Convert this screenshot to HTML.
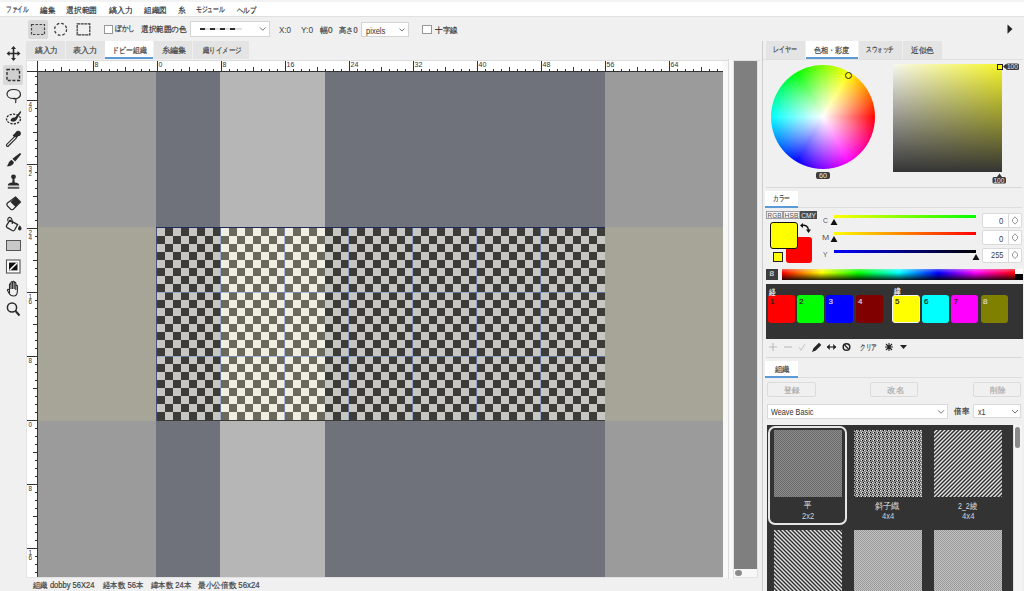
<!DOCTYPE html>
<html><head><meta charset="utf-8">
<style>
*{margin:0;padding:0;box-sizing:border-box}
html,body{width:1024px;height:591px;overflow:hidden;background:#f0f0f0;font-family:"Liberation Sans",sans-serif;font-size:9px;color:#333}
.a{position:absolute}
.t{position:absolute;white-space:nowrap;line-height:1;transform-origin:0 0;-webkit-text-stroke:0.2px currentColor}
</style></head><body>
<!-- menu bar -->
<div class="a" style="left:0;top:0;width:1024px;height:17px;background:#fff;border-bottom:1px solid #e0e0e0;border-top:2px solid #f3f3f3"></div>

<!-- canvas svg -->
<svg class="a" style="left:0;top:0" width="1024" height="591" shape-rendering="crispEdges">
<defs>
<pattern id="chk" x="157" y="228" width="16" height="16" patternUnits="userSpaceOnUse">
<rect width="16" height="16" fill="#c6c6c2"/><rect x="8" width="8" height="8" fill="#3d3c38"/><rect y="8" width="8" height="8" fill="#3d3c38"/>
</pattern>
<pattern id="chk2" x="157" y="228" width="16" height="16" patternUnits="userSpaceOnUse">
<rect width="16" height="16" fill="#f1efe2"/><rect x="8" width="8" height="8" fill="#6b695d"/><rect y="8" width="8" height="8" fill="#6b695d"/>
</pattern>
</defs>
<!-- rulers -->
<rect x="26" y="60" width="698" height="518" fill="#e2e2e2"/>
<rect x="27" y="61" width="696" height="10" fill="#fff"/>
<rect x="27" y="71" width="11" height="506" fill="#fff"/>
<!-- bands -->
<rect x="38" y="72" width="685" height="505" fill="#9b9b9b"/>
<rect x="38" y="227" width="685" height="194" fill="#a7a598"/>
<rect x="156" y="72" width="64" height="505" fill="#6f727b"/>
<rect x="220" y="72" width="105" height="505" fill="#b6b6b6"/>
<rect x="325" y="72" width="280" height="505" fill="#6f727b"/>
<rect x="156" y="227" width="449" height="194" fill="#3d3c38"/><rect x="156" y="227" width="1" height="194" fill="#4b5078"/>
<rect x="157" y="228" width="448" height="192" fill="url(#chk)"/>
<rect x="221" y="228" width="104" height="192" fill="url(#chk2)"/>
<g fill="#7c9ad4" opacity="0.6">
<rect x="220" y="228" width="1" height="192"/><rect x="284" y="228" width="1" height="192"/><rect x="348" y="228" width="1" height="192"/><rect x="412" y="228" width="1" height="192"/><rect x="476" y="228" width="1" height="192"/><rect x="540" y="228" width="1" height="192"/>
<rect x="157" y="292" width="448" height="1"/><rect x="157" y="356" width="448" height="1"/>
</g>
<rect x="156" y="227" width="449" height="1" fill="#1d2a5a"/>
<rect x="27" y="71" width="696" height="1" fill="#333"/>
<rect x="37" y="60" width="1" height="517" fill="#333"/>
<g fill="#333"><rect x="45" y="69" width="1" height="2"/>
<rect x="53" y="69" width="1" height="2"/>
<rect x="61" y="67" width="1" height="4"/>
<rect x="69" y="69" width="1" height="2"/>
<rect x="77" y="69" width="1" height="2"/>
<rect x="85" y="69" width="1" height="2"/>
<rect x="93" y="61" width="1" height="10"/>
<rect x="101" y="69" width="1" height="2"/>
<rect x="109" y="69" width="1" height="2"/>
<rect x="117" y="69" width="1" height="2"/>
<rect x="125" y="67" width="1" height="4"/>
<rect x="133" y="69" width="1" height="2"/>
<rect x="141" y="69" width="1" height="2"/>
<rect x="149" y="69" width="1" height="2"/>
<rect x="157" y="61" width="1" height="10"/>
<rect x="165" y="69" width="1" height="2"/>
<rect x="173" y="69" width="1" height="2"/>
<rect x="181" y="69" width="1" height="2"/>
<rect x="189" y="67" width="1" height="4"/>
<rect x="197" y="69" width="1" height="2"/>
<rect x="205" y="69" width="1" height="2"/>
<rect x="213" y="69" width="1" height="2"/>
<rect x="221" y="61" width="1" height="10"/>
<rect x="229" y="69" width="1" height="2"/>
<rect x="237" y="69" width="1" height="2"/>
<rect x="245" y="69" width="1" height="2"/>
<rect x="253" y="67" width="1" height="4"/>
<rect x="261" y="69" width="1" height="2"/>
<rect x="269" y="69" width="1" height="2"/>
<rect x="277" y="69" width="1" height="2"/>
<rect x="285" y="61" width="1" height="10"/>
<rect x="293" y="69" width="1" height="2"/>
<rect x="301" y="69" width="1" height="2"/>
<rect x="309" y="69" width="1" height="2"/>
<rect x="317" y="67" width="1" height="4"/>
<rect x="325" y="69" width="1" height="2"/>
<rect x="333" y="69" width="1" height="2"/>
<rect x="341" y="69" width="1" height="2"/>
<rect x="349" y="61" width="1" height="10"/>
<rect x="357" y="69" width="1" height="2"/>
<rect x="365" y="69" width="1" height="2"/>
<rect x="373" y="69" width="1" height="2"/>
<rect x="381" y="67" width="1" height="4"/>
<rect x="389" y="69" width="1" height="2"/>
<rect x="397" y="69" width="1" height="2"/>
<rect x="405" y="69" width="1" height="2"/>
<rect x="413" y="61" width="1" height="10"/>
<rect x="421" y="69" width="1" height="2"/>
<rect x="429" y="69" width="1" height="2"/>
<rect x="437" y="69" width="1" height="2"/>
<rect x="445" y="67" width="1" height="4"/>
<rect x="453" y="69" width="1" height="2"/>
<rect x="461" y="69" width="1" height="2"/>
<rect x="469" y="69" width="1" height="2"/>
<rect x="477" y="61" width="1" height="10"/>
<rect x="485" y="69" width="1" height="2"/>
<rect x="493" y="69" width="1" height="2"/>
<rect x="501" y="69" width="1" height="2"/>
<rect x="509" y="67" width="1" height="4"/>
<rect x="517" y="69" width="1" height="2"/>
<rect x="525" y="69" width="1" height="2"/>
<rect x="533" y="69" width="1" height="2"/>
<rect x="541" y="61" width="1" height="10"/>
<rect x="549" y="69" width="1" height="2"/>
<rect x="557" y="69" width="1" height="2"/>
<rect x="565" y="69" width="1" height="2"/>
<rect x="573" y="67" width="1" height="4"/>
<rect x="581" y="69" width="1" height="2"/>
<rect x="589" y="69" width="1" height="2"/>
<rect x="597" y="69" width="1" height="2"/>
<rect x="605" y="61" width="1" height="10"/>
<rect x="613" y="69" width="1" height="2"/>
<rect x="621" y="69" width="1" height="2"/>
<rect x="629" y="69" width="1" height="2"/>
<rect x="637" y="67" width="1" height="4"/>
<rect x="645" y="69" width="1" height="2"/>
<rect x="653" y="69" width="1" height="2"/>
<rect x="661" y="69" width="1" height="2"/>
<rect x="669" y="61" width="1" height="10"/>
<rect x="677" y="69" width="1" height="2"/>
<rect x="685" y="69" width="1" height="2"/>
<rect x="693" y="69" width="1" height="2"/>
<rect x="701" y="67" width="1" height="4"/>
<rect x="709" y="69" width="1" height="2"/>
<rect x="717" y="69" width="1" height="2"/>
</g>
<g fill="#333">
<rect x="35" y="76" width="3" height="1"/>
<rect x="35" y="84" width="3" height="1"/>
<rect x="35" y="92" width="3" height="1"/>
<rect x="27" y="100" width="11" height="1"/>
<rect x="35" y="108" width="3" height="1"/>
<rect x="35" y="116" width="3" height="1"/>
<rect x="35" y="124" width="3" height="1"/>
<rect x="33" y="132" width="5" height="1"/>
<rect x="35" y="140" width="3" height="1"/>
<rect x="35" y="148" width="3" height="1"/>
<rect x="35" y="156" width="3" height="1"/>
<rect x="27" y="164" width="11" height="1"/>
<rect x="35" y="172" width="3" height="1"/>
<rect x="35" y="180" width="3" height="1"/>
<rect x="35" y="188" width="3" height="1"/>
<rect x="33" y="196" width="5" height="1"/>
<rect x="35" y="204" width="3" height="1"/>
<rect x="35" y="212" width="3" height="1"/>
<rect x="35" y="220" width="3" height="1"/>
<rect x="27" y="228" width="11" height="1"/>
<rect x="35" y="236" width="3" height="1"/>
<rect x="35" y="244" width="3" height="1"/>
<rect x="35" y="252" width="3" height="1"/>
<rect x="33" y="260" width="5" height="1"/>
<rect x="35" y="268" width="3" height="1"/>
<rect x="35" y="276" width="3" height="1"/>
<rect x="35" y="284" width="3" height="1"/>
<rect x="27" y="292" width="11" height="1"/>
<rect x="35" y="300" width="3" height="1"/>
<rect x="35" y="308" width="3" height="1"/>
<rect x="35" y="316" width="3" height="1"/>
<rect x="33" y="324" width="5" height="1"/>
<rect x="35" y="332" width="3" height="1"/>
<rect x="35" y="340" width="3" height="1"/>
<rect x="35" y="348" width="3" height="1"/>
<rect x="27" y="356" width="11" height="1"/>
<rect x="35" y="364" width="3" height="1"/>
<rect x="35" y="372" width="3" height="1"/>
<rect x="35" y="380" width="3" height="1"/>
<rect x="33" y="388" width="5" height="1"/>
<rect x="35" y="396" width="3" height="1"/>
<rect x="35" y="404" width="3" height="1"/>
<rect x="35" y="412" width="3" height="1"/>
<rect x="27" y="420" width="11" height="1"/>
<rect x="35" y="428" width="3" height="1"/>
<rect x="35" y="436" width="3" height="1"/>
<rect x="35" y="444" width="3" height="1"/>
<rect x="33" y="452" width="5" height="1"/>
<rect x="35" y="460" width="3" height="1"/>
<rect x="35" y="468" width="3" height="1"/>
<rect x="35" y="476" width="3" height="1"/>
<rect x="27" y="484" width="11" height="1"/>
<rect x="35" y="492" width="3" height="1"/>
<rect x="35" y="500" width="3" height="1"/>
<rect x="35" y="508" width="3" height="1"/>
<rect x="33" y="516" width="5" height="1"/>
<rect x="35" y="524" width="3" height="1"/>
<rect x="35" y="532" width="3" height="1"/>
<rect x="35" y="540" width="3" height="1"/>
<rect x="27" y="548" width="11" height="1"/>
<rect x="35" y="556" width="3" height="1"/>
<rect x="35" y="564" width="3" height="1"/>
<rect x="35" y="572" width="3" height="1"/></g>
</svg>


<!-- ruler labels -->
<svg class="a" style="left:0;top:0" width="760" height="591" font-family="Liberation Sans" font-size="7" fill="#333">
<text x="94.5" y="66.6">8</text><text x="158.5" y="66.6">0</text><text x="222.5" y="66.6">8</text><text x="286.5" y="66.6">16</text><text x="350.5" y="66.6">24</text><text x="414.5" y="66.6">32</text><text x="478.5" y="66.6">40</text><text x="542.5" y="66.6">48</text><text x="606.5" y="66.6">56</text><text x="670.5" y="66.6">64</text>
<g font-size="6.3"><text x="28.4" y="106.6">4</text><text x="28.4" y="111.9">0</text><text x="28.4" y="170.6">3</text><text x="28.4" y="175.9">2</text><text x="28.4" y="234.6">2</text><text x="28.4" y="239.9">4</text><text x="28.4" y="298.6">1</text><text x="28.4" y="303.9">6</text><text x="28.4" y="362.6">8</text><text x="28.4" y="426.6">0</text><text x="28.4" y="490.6">8</text><text x="28.4" y="554.6">1</text><text x="28.4" y="559.9">6</text></g>
</svg>

<!-- toolbar -->
<div class="a" style="left:28px;top:20px;width:20px;height:19px;background:#d9d9d9;border-radius:2px"></div>
<svg class="a" style="left:0;top:17px" width="100" height="24">
<rect x="31.5" y="7.5" width="13" height="10" fill="#cfcfcf" stroke="#444" stroke-width="1.2" stroke-dasharray="2.5 1.5"/>
<circle cx="60.6" cy="12.3" r="6" fill="none" stroke="#3a3a3a" stroke-width="1.3" stroke-dasharray="2.7 2"/>
<rect x="77.2" y="6.9" width="12.6" height="11" fill="none" stroke="#3a3a3a" stroke-width="1.2" stroke-dasharray="3 .6"/>
</svg>
<div class="a" style="left:104px;top:25px;width:9px;height:9px;background:#fff;border:1px solid #999"></div>
<div class="a" style="left:190px;top:21px;width:80px;height:16px;background:#fff;border:1px solid #d4d4d4"></div>
<svg class="a" style="left:190px;top:21px" width="80" height="16">
<g fill="#111"><rect x="10" y="7" width="5" height="2"/><rect x="20" y="7" width="5" height="2"/><rect x="30" y="7" width="5" height="2"/><rect x="40" y="7" width="5" height="2"/></g>
<rect x="10" y="7.5" width="42" height="1" fill="#888" opacity=".5"/>
<path d="M70 6.5 L72.8 9.3 L75.6 6.5" fill="none" stroke="#777" stroke-width="1"/>
</svg>
<div class="a" style="left:361px;top:22px;width:48px;height:15px;background:#fff;border:1px solid #d4d4d4"></div>
<svg class="a" style="left:361px;top:22px" width="48" height="15"><path d="M38.5 6.5 L41 9 L43.5 6.5" fill="none" stroke="#777" stroke-width="1"/></svg>
<div class="a" style="left:422px;top:25px;width:10px;height:9px;background:#fff;border:1px solid #999"></div>
<svg class="a" style="left:1005px;top:24px" width="10" height="12"><path d="M2.5 0.5 L7.5 5 L2.5 9.8Z" fill="#222"/></svg>

<!-- left tools -->
<div class="a" style="left:3px;top:65px;width:20px;height:20px;background:#d9d9d9;border-radius:2px"></div>
<svg class="a" style="left:0;top:40px" width="27" height="290" fill="#2a2a2a" stroke="#2a2a2a">
<!-- move -->
<g stroke-width="1.6" fill="none"><path d="M13.5 8 V19 M8 13.5 H19"/></g>
<path d="M13.5 6 L11 9 H16Z M13.5 21 L11 18 H16Z M6.5 13.5 L9.5 11 V16Z M20.5 13.5 L17.5 11 V16Z" stroke="none"/>
<!-- rect select -->
<rect x="7" y="29.5" width="12.5" height="11" fill="#cfcfcf" stroke="#333" stroke-width="1.4" stroke-dasharray="3 1.6"/>
<!-- lasso -->
<path d="M13 58.5 C15 59.5 20.5 58 20.5 54.5 C20.5 51 17.5 49.5 13.5 49.5 C9.5 49.5 7 51.5 7 54 C7 57 10 58.5 13 58.5 C14.5 58.5 16 58 16 59.5 C16 61 15 62 16 63" fill="none" stroke-width="1.2"/>
<!-- eye brush -->
<ellipse cx="13.5" cy="79" rx="7" ry="4.8" fill="none" stroke-width="1.3" stroke-dasharray="2.2 1.2"/>
<path d="M10.5 80.5 C11 78 13 77 15 77.5 L20 71.5 C20.5 71 21.5 71.5 21 72.5 L17 79 C16 82 12 82.5 10.5 80.5Z" stroke="none"/>
<!-- eyedropper -->
<circle cx="18.2" cy="93.4" r="2.6" stroke="none"/>
<path d="M12.6 95.6 L15.6 92.6 L18.8 95.8 L15.8 98.8Z" stroke="none"/>
<path d="M15.2 97.6 L7.6 105.2" stroke-width="3.4" stroke-linecap="round"/>
<path d="M15.2 97.6 L7.6 105.2" stroke="#f0f0f0" stroke-width="1.2" stroke-linecap="round"/>
<!-- brush -->
<path d="M20.2 113.2 C21 113.2 21.4 114 20.9 114.6 L15.2 121.4 L12.4 118.8 L19.3 113.6 C19.6 113.4 19.9 113.2 20.2 113.2Z M11.8 120 L13.9 122.1 C13.6 124.8 11.2 126.6 6.4 126.3 C7.6 125.4 8 124.6 8.6 123 C9.2 121.2 10.6 120.3 11.8 120Z" stroke="none"/>
<!-- stamp -->
<circle cx="13.5" cy="136.8" r="2.4" stroke="none"/>
<path d="M7.8 145.6 C7.8 143.4 9.8 142.8 12.3 142.5 L12.6 139 H14.4 L14.7 142.5 C17.2 142.8 19.3 143.4 19.3 145.6Z" stroke="none"/>
<rect x="7.8" y="146.8" width="11.5" height="2" fill="#555" stroke="none"/>
<!-- eraser -->
<path d="M15.5 157 L20.5 162 L13.5 169 C12.5 170 11.5 170 10.5 169 L7.5 166 C6.5 165 6.5 164 7.5 163Z" fill="none" stroke-width="1.1"/>
<path d="M15.5 157 L20.5 162 L15.5 167 L10.5 162Z" stroke="none"/>
<!-- bucket -->
<path d="M10 180.2 L17.6 184.6 L14.6 190 C14.1 190.8 13.1 191 12.2 190.5 L7.2 187.6 C6.4 187.1 6.1 186.2 6.6 185.3Z" fill="none" stroke-width="1.3"/>
<path d="M8.2 181.5 C7.2 179.6 8 177.4 9.6 177.4 C11.2 177.4 12.4 179 12.2 182.6" fill="none" stroke-width="1.1"/>
<circle cx="12.4" cy="183" r=".9" stroke="none"/>
<path d="M19.8 185.2 C20.9 186.8 21.6 187.8 21.6 188.6 C21.6 189.7 20.8 190.4 19.8 190.4 C18.8 190.4 18 189.7 18 188.6 C18 187.8 18.7 186.8 19.8 185.2Z" stroke="none"/>
<!-- rect -->
<rect x="6.5" y="200.5" width="14" height="10" fill="#c8c8c8" stroke="#555" stroke-width="1"/>
<!-- swap -->
<rect x="6.5" y="220" width="13.5" height="13" fill="#fff" stroke="#555" stroke-width="1.1"/>
<rect x="9" y="222.6" width="8.5" height="7.8" fill="#111" stroke="none"/>
<path d="M9.8 230 L17 223" stroke="#fff" stroke-width="1.6"/>
<!-- hand -->
<path d="M9.5 254 V244.5 C9.5 243.5 11 243.5 11 244.5 V249 V242.5 C11 241.5 12.6 241.5 12.6 242.5 V249 V242 C12.6 241 14.2 241 14.2 242 V249 V243 C14.2 242 15.8 242 15.8 243 V250 V246 C15.8 245 17.4 245 17.4 246 V251 C17.4 254 16 256 13.5 256 C11.5 256 10.5 255.5 9.5 254 L7.5 250.5 C7 249.5 8 248.8 8.8 249.5 L9.5 250.5" fill="none" stroke-width="1.1"/>
<!-- zoom -->
<circle cx="12" cy="267.5" r="4.6" fill="none" stroke-width="1.5"/>
<path d="M15.5 271 L19.5 275.5" stroke-width="2"/>
</svg>

<!-- doc tabs -->
<div class="a" style="left:26px;top:41px;width:39px;height:18px;background:#e4e4e4"></div>
<div class="a" style="left:66px;top:41px;width:39px;height:18px;background:#e4e4e4"></div>
<div class="a" style="left:105px;top:41px;width:48px;height:18px;background:#fff;border-bottom:2px solid #5b9ad6"></div>
<div class="a" style="left:154px;top:41px;width:38px;height:18px;background:#e4e4e4"></div>
<div class="a" style="left:193px;top:41px;width:56px;height:18px;background:#e4e4e4"></div>
<div class="a" style="left:26px;top:60px;width:734px;height:1px;background:#dcdcdc"></div>

<!-- scroll strip -->
<div class="a" style="left:723px;top:61px;width:5px;height:517px;background:#f8f8f8"></div>
<div class="a" style="left:728px;top:59px;width:1px;height:520px;background:#dcdcdc"></div>
<div class="a" style="left:729px;top:60px;width:4px;height:518px;background:#f8f8f8"></div>
<div class="a" style="left:733px;top:60px;width:25px;height:518px;background:#f7f7f7;border:1px solid #e2e2e2"></div>
<div class="a" style="left:734px;top:61px;width:23px;height:508px;background:#7f7f7f"></div>
<div class="a" style="left:735px;top:570px;width:7px;height:6px;border-radius:50%;background:#8a8a8a"></div>

<!-- status -->

<!-- right panel -->
<div class="a" style="left:762px;top:41px;width:1px;height:550px;background:#cdcdcd"></div>
<div class="a" style="left:766px;top:41px;width:39px;height:18px;background:#e4e4e4"></div>
<div class="a" style="left:806px;top:41px;width:52px;height:18px;background:#fff;border-bottom:2px solid #5b9ad6"></div>
<div class="a" style="left:859px;top:41px;width:43px;height:18px;background:#e4e4e4"></div>
<div class="a" style="left:903px;top:41px;width:39px;height:18px;background:#e4e4e4"></div>
<div class="a" style="left:763px;top:59px;width:260px;height:1px;background:#e0e0e0"></div>

<div class="a" style="left:771px;top:65px;width:104px;height:104px;border-radius:50%;background:radial-gradient(circle closest-side,#fff 0%,rgba(255,255,255,.5) 50%,rgba(255,255,255,0) 100%),conic-gradient(from 90deg,#f00,#f0f,#00f,#0ff,#0f0,#ff0,#f00)"></div>
<div class="a" style="left:844.5px;top:71.5px;width:7px;height:7px;border-radius:50%;border:1.2px solid #222"></div>
<div class="a" style="left:816px;top:172px;width:14px;height:7px;border-radius:2px;background:#3c3c3c"></div>

<div class="a" style="left:893px;top:64px;width:109px;height:108px;background:linear-gradient(to bottom,rgba(51,51,51,0) 0%,#343434 100%),linear-gradient(to right,#f8f8ee,#f6f628)"></div>
<div class="a" style="left:997px;top:64px;width:5.5px;height:5.5px;background:#ff0;border:1px solid #222"></div>
<svg class="a" style="left:1002px;top:62px" width="20" height="10"><path d="M1 4.5 L4 2 V7Z" fill="#333"/><rect x="4" y="1.5" width="13" height="6.5" rx="1.5" fill="#3c3c3c"/><text x="5" y="7.3" font-family="Liberation Sans" font-size="6.5" fill="#eee">100</text></svg>
<svg class="a" style="left:990px;top:172px" width="18" height="12"><path d="M9.5 1.5 L12 5 H7Z" fill="#333"/><rect x="2.5" y="5" width="13.5" height="6.5" rx="1.5" fill="#3c3c3c"/><text x="3.5" y="10.8" font-family="Liberation Sans" font-size="6.5" fill="#eee">100</text></svg>
<div class="a" style="left:766px;top:187px;width:256px;height:1px;background:#d8d8d8"></div>

<!-- color section -->
<div class="a" style="left:765px;top:191px;width:33px;height:17px;background:#fff;border-bottom:2px solid #5b9ad6"></div>
<div class="a" style="left:798px;top:207px;width:224px;height:1px;background:#dedede"></div>
<svg class="a" style="left:766px;top:211px" width="52" height="8" font-family="Liberation Sans" font-size="6.8">
<rect x="0.5" y="0.5" width="16" height="7" fill="#f4f4f4" stroke="#8a8a8a" stroke-width=".8"/><rect x="17.5" y="0.5" width="16" height="7" fill="#f4f4f4" stroke="#8a8a8a" stroke-width=".8"/><rect x="34" y="0" width="17" height="8" fill="#4a4a4a"/>
<text x="1.6" y="6.7" fill="#555" textLength="13.8" lengthAdjust="spacingAndGlyphs">RGB</text><text x="18.6" y="6.7" fill="#555" textLength="13.8" lengthAdjust="spacingAndGlyphs">HSB</text><text x="35.2" y="6.7" fill="#eee" textLength="14.6" lengthAdjust="spacingAndGlyphs">CMY</text>
</svg>
<div class="a" style="left:786px;top:237px;width:26px;height:26px;background:#f00;border-radius:3px"></div>
<div class="a" style="left:770px;top:222px;width:28px;height:27px;background:#ff0;border:1.6px solid #111;border-radius:3px"></div>
<div class="a" style="left:773px;top:252px;width:10px;height:10px;background:#ff0;border:1px solid #222"></div>
<svg class="a" style="left:799px;top:222px" width="14" height="13"><path d="M3 3.5 C6 2.5 9 4 9.5 8" fill="none" stroke="#111" stroke-width="1.4"/><path d="M1 3.5 L4 1 V6Z M9.5 11 L7 7.5 H12Z" fill="#111"/></svg>
<div class="a" style="left:834px;top:215px;width:142px;height:3px;background:linear-gradient(to right,#ff0,#0f0)"></div>
<div class="a" style="left:834px;top:232px;width:142px;height:3px;background:linear-gradient(to right,#ff0,#f00)"></div>
<div class="a" style="left:834px;top:250px;width:142px;height:3px;background:linear-gradient(to right,#00f,#000)"></div>
<svg class="a" style="left:828px;top:218px" width="160" height="44"><path d="M2.5 7 L6 1 L9.5 7Z M2.5 24 L6 18 L9.5 24Z M144.5 42 L148 36 L151.5 42Z" fill="#111"/></svg>
<div class="a" style="left:982px;top:213px;width:40px;height:15px;background:#fff;border:1px solid #dadada;border-radius:2px"></div>
<div class="a" style="left:982px;top:230px;width:40px;height:15px;background:#fff;border:1px solid #dadada;border-radius:2px"></div>
<div class="a" style="left:982px;top:248px;width:40px;height:15px;background:#fff;border:1px solid #dadada;border-radius:2px"></div>
<div class="a" style="left:1008px;top:214px;width:1px;height:13px;background:#dadada"></div>
<div class="a" style="left:1008px;top:231px;width:1px;height:13px;background:#dadada"></div>
<div class="a" style="left:1008px;top:249px;width:1px;height:13px;background:#dadada"></div>
<svg class="a" style="left:1009px;top:213px" width="13" height="50"><g fill="none" stroke="#8a8a8a" stroke-width="0.9"><path d="M3.5 6.5 L6 3.8 L8.5 6.5 V8.5 L6 11.2 L3.5 8.5Z"/><path d="M3.5 23.5 L6 20.8 L8.5 23.5 V25.5 L6 28.2 L3.5 25.5Z"/><path d="M3.5 41 L6 38.3 L8.5 41 V43 L6 45.7 L3.5 43Z"/></g></svg>

<div class="a" style="left:766px;top:269px;width:12px;height:11px;background:#3c3c3c"></div>
<div class="a" style="left:782px;top:269px;width:233px;height:11px;background:linear-gradient(to bottom,rgba(255,255,255,.35),rgba(0,0,0,0) 35%,rgba(0,0,0,.85) 100%),linear-gradient(to right,#f00,#ff0 17%,#0f0 33%,#0ff 50%,#00f 67%,#f0f 83%,#f00)"></div>
<div class="a" style="left:1015px;top:269px;width:8px;height:5px;background:#fff"></div>
<div class="a" style="left:1015px;top:274px;width:8px;height:6px;background:#000"></div>

<div class="a" style="left:766px;top:284px;width:257px;height:55px;background:#333"></div>
<div class="a" style="left:768px;top:295px;width:27px;height:28px;background:#f00;border-radius:3px"></div>
<div class="a" style="left:797px;top:295px;width:27px;height:28px;background:#0f0;border-radius:3px"></div>
<div class="a" style="left:826px;top:295px;width:27px;height:28px;background:#00f;border-radius:3px"></div>
<div class="a" style="left:856px;top:295px;width:27px;height:28px;background:#800000;border-radius:3px"></div>
<div class="a" style="left:892px;top:295px;width:28px;height:28px;background:#ff0;border-radius:3px;border:1.5px solid #f4f4f4"></div>
<div class="a" style="left:922px;top:295px;width:27px;height:28px;background:#0ff;border-radius:3px"></div>
<div class="a" style="left:951px;top:295px;width:27px;height:28px;background:#f0f;border-radius:3px"></div>
<div class="a" style="left:981px;top:295px;width:27px;height:28px;background:#808000;border-radius:3px"></div>

<svg class="a" style="left:766px;top:340px" width="150" height="14">
<g fill="none" stroke-width="1.1">
<path d="M7 3 V11 M3 7 H11" stroke="#bbb"/>
<path d="M18 7 H26" stroke="#bbb"/>
<path d="M33 7.5 L35 10 L39 4" stroke="#ccc"/>
<path d="M47 11 L48 8.5 L53 3.5 L54.5 5 L49.5 10Z" stroke="#222" fill="#222"/>
<path d="M61 7 H70" stroke="#222"/>
<path d="M61 7 L63.5 4.5 V9.5Z M70 7 L67.5 4.5 V9.5Z" fill="#222" stroke="#222" stroke-width=".5"/>
<circle cx="80.5" cy="7" r="3.3" stroke="#222" stroke-width="1.5"/><path d="M78.5 5 L82.5 9" stroke="#222" stroke-width="1.3"/>
<path d="M123 3 L123 11 M119 7 H127 M120 4 L126 10 M126 4 L120 10" stroke="#222" stroke-width="1.1"/>
</g>
<path d="M134 5 L141 5 L137.5 9Z" fill="#222"/>
</svg>
<div class="a" style="left:766px;top:357px;width:256px;height:1px;background:#d8d8d8"></div>

<!-- weave section -->
<div class="a" style="left:765px;top:361px;width:33px;height:17px;background:#fff;border-bottom:2px solid #5b9ad6"></div>
<div class="a" style="left:798px;top:377px;width:224px;height:1px;background:#dedede"></div>
<div class="a" style="left:767px;top:382px;width:49px;height:15px;border:1px solid #dcdcdc;border-radius:2px"></div>
<div class="a" style="left:870px;top:382px;width:48px;height:15px;border:1px solid #dcdcdc;border-radius:2px"></div>
<div class="a" style="left:973px;top:382px;width:48px;height:15px;border:1px solid #dcdcdc;border-radius:2px"></div>
<div class="a" style="left:767px;top:404px;width:181px;height:15px;background:#fff;border:1px solid #dadada"></div>
<svg class="a" style="left:930px;top:404px" width="18" height="15"><path d="M8 6.3 L11 9.3 L14 6.3" fill="none" stroke="#777" stroke-width="1"/></svg>
<div class="a" style="left:973px;top:404px;width:48px;height:14px;background:#fff;border:1px solid #dadada"></div>
<svg class="a" style="left:1003px;top:404px" width="18" height="15"><path d="M9 6 L12 9 L15 6" fill="none" stroke="#777" stroke-width="1"/></svg>

<div class="a" style="left:767px;top:425px;width:246px;height:166px;background:#333"></div>
<div class="a" style="left:1013px;top:425px;width:9px;height:166px;background:#f4f4f4;border-left:1px solid #e0e0e0"></div>
<div class="a" style="left:1015px;top:427px;width:5px;height:21px;background:#8a8a8a;border-radius:3px"></div>
<div class="a" style="left:768px;top:426px;width:79px;height:99px;border:2px solid #e6e6e6;border-radius:7px"></div>
<svg class="a" style="left:767px;top:425px" width="246" height="166" shape-rendering="crispEdges">
<defs>
<pattern id="g1" width="2" height="2" patternUnits="userSpaceOnUse"><rect width="2" height="2" fill="#8a8a8a"/><rect width="1" height="1" fill="#6c6c6c"/><rect x="1" y="1" width="1" height="1" fill="#6c6c6c"/></pattern>
<pattern id="g2" width="4" height="4" patternUnits="userSpaceOnUse"><rect width="4" height="4" fill="#8c8c8c"/><rect x="0" y="1" width="1" height="1" fill="#111"/><rect x="1" y="1" width="1" height="1" fill="#eee"/><rect x="2" y="3" width="1" height="1" fill="#eee"/><rect x="3" y="3" width="1" height="1" fill="#111"/><rect x="1" y="0" width="1" height="1" fill="#5a5a5a"/><rect x="3" y="2" width="1" height="1" fill="#bdbdbd"/></pattern>
<pattern id="g3" width="4" height="4" patternUnits="userSpaceOnUse"><rect width="4" height="4" fill="#8a8a8a"/><rect x="0" y="0" width="1" height="1" fill="#2e2e2e"/><rect x="2" y="0" width="1" height="1" fill="#e2e2e2"/><rect x="1" y="1" width="1" height="1" fill="#e2e2e2"/><rect x="3" y="1" width="1" height="1" fill="#2e2e2e"/><rect x="0" y="2" width="1" height="1" fill="#e2e2e2"/><rect x="2" y="2" width="1" height="1" fill="#2e2e2e"/><rect x="1" y="3" width="1" height="1" fill="#2e2e2e"/><rect x="3" y="3" width="1" height="1" fill="#e2e2e2"/></pattern>
<pattern id="g4" width="4" height="4" patternUnits="userSpaceOnUse"><rect width="4" height="4" fill="#8a8a8a"/><rect x="0" y="0" width="1" height="1" fill="#2e2e2e"/><rect x="2" y="0" width="1" height="1" fill="#e2e2e2"/><rect x="1" y="1" width="1" height="1" fill="#2e2e2e"/><rect x="3" y="1" width="1" height="1" fill="#e2e2e2"/><rect x="0" y="2" width="1" height="1" fill="#e2e2e2"/><rect x="2" y="2" width="1" height="1" fill="#2e2e2e"/><rect x="1" y="3" width="1" height="1" fill="#e2e2e2"/><rect x="3" y="3" width="1" height="1" fill="#2e2e2e"/></pattern>
<pattern id="g5" width="2" height="2" patternUnits="userSpaceOnUse"><rect width="2" height="2" fill="#c2c2c2"/><rect width="1" height="1" fill="#9a9a9a"/><rect x="1" y="1" width="1" height="1" fill="#9a9a9a"/></pattern>
</defs>
<rect x="7" y="5" width="68" height="67" fill="url(#g1)"/>
<rect x="87" y="5" width="68" height="67" fill="url(#g2)"/>
<rect x="167" y="5" width="68" height="67" fill="url(#g3)"/>
<rect x="7" y="105" width="68" height="61" fill="url(#g4)"/>
<rect x="87" y="105" width="68" height="61" fill="url(#g5)"/>
<rect x="167" y="105" width="68" height="61" fill="url(#g5)"/>
</svg>
<!-- status bar -->

<div id="txt">
<div class="t" style="--x:5.7;--y:6.3;--w:22.3;color:#333;font-size:8.2px;left:5.70px;top:5.70px;transform:scaleX(0.696875);">ファイル</div>
<div class="t" style="--x:38.7;--y:6.3;--w:16;color:#333;font-size:8.2px;left:39.64px;top:6.70px;transform:scaleX(0.941176);">編集</div>
<div class="t" style="--x:66;--y:6.3;--w:31;color:#333;font-size:8.2px;left:66.00px;top:6.70px;transform:scaleX(0.96875);">選択範囲</div>
<div class="t" style="--x:108.3;--y:6.3;--w:23.6;color:#333;font-size:8.2px;left:109.28px;top:6.70px;transform:scaleX(0.983333);">縞入力</div>
<div class="t" style="--x:143.2;--y:6.3;--w:23.6;color:#333;font-size:8.2px;left:144.14px;top:6.70px;transform:scaleX(0.944);">組織図</div>
<div class="t" style="--x:178;--y:6.3;--w:7.5;color:#333;font-size:8.2px;left:178.00px;top:6.70px;transform:scaleX(0.9375);">糸</div>
<div class="t" style="--x:196.3;--y:6.3;--w:28.7;color:#333;font-size:8.2px;left:196.30px;top:5.70px;transform:scaleX(0.7175);">モジュール</div>
<div class="t" style="--x:237;--y:6.3;--w:20;color:#333;font-size:8.2px;left:237.00px;top:6.70px;transform:scaleX(0.8);">ヘルプ</div>
<div class="t" style="--x:115.4;--y:25.8;--w:19.1;color:#333;font-size:8.2px;left:115.40px;top:25.20px;transform:scaleX(0.830435);">ぼかし</div>
<div class="t" style="--x:141.2;--y:25.8;--w:45.5;color:#333;font-size:8.2px;left:141.20px;top:26.20px;transform:scaleX(0.947917);">選択範囲の色</div>
<div class="t" style="--x:279.4;--y:27.4;--w:12.1;color:#444;font-size:9px;-webkit-text-stroke:0;left:279.40px;top:25.90px;transform:scaleX(0.896069);">X:0</div>
<div class="t" style="--x:300.9;--y:27.4;--w:12.1;color:#444;font-size:9px;-webkit-text-stroke:0;left:300.90px;top:25.90px;transform:scaleX(0.93028);">Y:0</div>
<div class="t" style="--x:319.8;--y:26.2;--w:13.1;color:#444;font-size:8.2px;left:319.80px;top:26.60px;transform:scaleX(1.00769);">幅0</div>
<div class="t" style="--x:339.3;--y:26.2;--w:19;color:#444;font-size:8.2px;left:339.30px;top:26.60px;transform:scaleX(0.904762);">高さ0</div>
<div class="t" style="--x:365.7;--y:26.8;--w:19.5;color:#333;font-size:9.5px;-webkit-text-stroke:0;left:365.70px;top:25.55px;transform:scaleX(0.794683);">pixels</div>
<div class="t" style="--x:435;--y:26.2;--w:22.9;color:#333;font-size:8.2px;left:435.00px;top:26.60px;transform:scaleX(0.954167);">十字線</div>
<div class="t" style="--x:34;--y:46.2;--w:23;color:#444;font-size:8.2px;left:34.96px;top:46.60px;transform:scaleX(0.958333);">縞入力</div>
<div class="t" style="--x:73.4;--y:46.2;--w:23.5;color:#444;font-size:8.2px;left:73.40px;top:46.60px;transform:scaleX(1.02174);">表入力</div>
<div class="t" style="--x:113.3;--y:46.2;--w:32.7;color:#444;font-size:8.2px;left:111.58px;top:46.60px;transform:scaleX(0.860526);">ドビー組織</div>
<div class="t" style="--x:161.8;--y:46.2;--w:24.1;color:#444;font-size:8.2px;left:161.80px;top:46.60px;transform:scaleX(1.00417);">糸編集</div>
<div class="t" style="--x:202.3;--y:46.2;--w:39.2;color:#444;font-size:8.2px;left:203.10px;top:46.60px;transform:scaleX(0.8);">織りイメージ</div>
<div class="t" style="--x:773.9;--y:46.3;--w:23.2;color:#444;font-size:8.2px;left:773.15px;top:45.70px;transform:scaleX(0.748387);">レイヤー</div>
<div class="t" style="--x:813.8;--y:46.3;--w:35.6;color:#444;font-size:8.2px;left:813.80px;top:46.70px;transform:scaleX(0.89);">色相・彩度</div>
<div class="t" style="--x:866.1;--y:46.3;--w:27.9;color:#444;font-size:8.2px;left:866.10px;top:45.70px;transform:scaleX(0.6975);">スウォッチ</div>
<div class="t" style="--x:910.6;--y:46.3;--w:22.9;color:#444;font-size:8.2px;left:910.60px;top:46.70px;transform:scaleX(0.954167);">近似色</div>
<div class="t" style="--x:818.5;--y:173.5;--w:8.5;color:#eee;font-size:6.5px;-webkit-text-stroke:0;left:818.50px;top:172.75px;transform:scaleX(1.11622);">60</div>
<div class="t" style="--x:773.4;--y:196;--w:17.1;color:#444;font-size:8.2px;left:773.40px;top:195.40px;transform:scaleX(0.7125);">カラー</div>
<div class="t" style="--x:822.8;--y:218;--w:5;color:#555;font-size:8px;-webkit-text-stroke:0;left:822.80px;top:216.50px;transform:scaleX(0.833333);">C</div>
<div class="t" style="--x:821.7;--y:235.1;--w:7.6;color:#555;font-size:8px;-webkit-text-stroke:0;left:821.70px;top:233.60px;transform:scaleX(1.08571);">M</div>
<div class="t" style="--x:822.8;--y:252.4;--w:5;color:#555;font-size:8px;-webkit-text-stroke:0;left:822.80px;top:250.90px;transform:scaleX(0.833333);">Y</div>
<div class="t" style="--x:998.7;--y:218.3;--w:4.6;color:#444;font-size:8.5px;-webkit-text-stroke:0;left:998.70px;top:217.05px;transform:scaleX(0.92);">0</div>
<div class="t" style="--x:998.7;--y:235.8;--w:4.6;color:#444;font-size:8.5px;-webkit-text-stroke:0;left:998.70px;top:234.55px;transform:scaleX(0.92);">0</div>
<div class="t" style="--x:990.6;--y:252.5;--w:12.7;color:#444;font-size:8.5px;-webkit-text-stroke:0;left:990.60px;top:251.25px;transform:scaleX(0.878614);">255</div>
<div class="t" style="--x:769.5;--y:271.5;--w:0;color:#ddd;font-size:8px;left:769.50px;top:270.00px;">8</div>
<div class="t" style="--x:768;--y:288;--w:7.5;color:#eee;font-size:8px;left:768.83px;top:288.50px;transform:scaleX(0.833333);">経</div>
<div class="t" style="--x:893;--y:287.5;--w:7.5;color:#eee;font-size:8px;left:893.83px;top:288.00px;transform:scaleX(0.833333);">緯</div>
<div class="t" style="--x:770;--y:299;--w:0;color:#222;font-size:8px;left:770.00px;top:297.50px;">1</div>
<div class="t" style="--x:799;--y:299;--w:0;color:#222;font-size:8px;left:799.00px;top:297.50px;">2</div>
<div class="t" style="--x:828.5;--y:299;--w:0;color:#ddd;font-size:8px;left:828.50px;top:297.50px;">3</div>
<div class="t" style="--x:858;--y:299;--w:0;color:#ddd;font-size:8px;left:858.00px;top:297.50px;">4</div>
<div class="t" style="--x:895;--y:299;--w:0;color:#222;font-size:8px;left:895.00px;top:297.50px;">5</div>
<div class="t" style="--x:924;--y:299;--w:0;color:#222;font-size:8px;left:924.00px;top:297.50px;">6</div>
<div class="t" style="--x:953.5;--y:299;--w:0;color:#222;font-size:8px;left:953.50px;top:297.50px;">7</div>
<div class="t" style="--x:983;--y:299;--w:0;color:#ddd;font-size:8px;left:983.00px;top:297.50px;">8</div>
<div class="t" style="--x:859.9;--y:344.6;--w:16.9;color:#444;font-size:8.2px;left:859.90px;top:344.00px;transform:scaleX(0.704167);">クリア</div>
<div class="t" style="--x:774;--y:365.2;--w:15.7;color:#444;font-size:8.2px;left:774.92px;top:365.60px;transform:scaleX(0.923529);">組織</div>
<div class="t" style="--x:784.4;--y:386.6;--w:15.2;color:#aaa;font-size:8.2px;left:784.40px;top:387.00px;transform:scaleX(0.95);">登録</div>
<div class="t" style="--x:887;--y:386.6;--w:16;color:#aaa;font-size:8.2px;left:887.00px;top:387.00px;transform:scaleX(1.06667);">改名</div>
<div class="t" style="--x:989.6;--y:386.6;--w:15.1;color:#aaa;font-size:8.2px;left:989.60px;top:387.00px;transform:scaleX(0.94375);">削除</div>
<div class="t" style="--x:771.4;--y:408.7;--w:42.6;color:#333;font-size:9.5px;-webkit-text-stroke:0;left:771.40px;top:407.45px;transform:scaleX(0.767358);">Weave Basic</div>
<div class="t" style="--x:953.9;--y:407.8;--w:15.1;color:#333;font-size:8.2px;left:953.90px;top:408.20px;transform:scaleX(0.94375);">倍率</div>
<div class="t" style="--x:978;--y:409;--w:7.7;color:#333;font-size:8.5px;-webkit-text-stroke:0;left:978.00px;top:407.75px;transform:scaleX(0.832432);">x1</div>
<div class="t" style="--x:803.6;--y:501;--w:7.2;color:#d8d8d8;font-size:8.5px;-webkit-text-stroke:0.05px currentColor;left:803.60px;top:500.75px;transform:scaleX(0.8);">平</div>
<div class="t" style="--x:801.6;--y:513.3;--w:12.1;color:#d0d0d0;font-size:9px;-webkit-text-stroke:0;left:801.60px;top:511.80px;transform:scaleX(0.834174);">2x2</div>
<div class="t" style="--x:875.3;--y:501;--w:24.6;color:#d8d8d8;font-size:8.5px;-webkit-text-stroke:0.05px currentColor;left:875.30px;top:501.75px;transform:scaleX(0.911111);">斜子織</div>
<div class="t" style="--x:882;--y:513.3;--w:12.1;color:#d0d0d0;font-size:9px;-webkit-text-stroke:0;left:882.00px;top:511.80px;transform:scaleX(0.834174);">4x4</div>
<div class="t" style="--x:958.3;--y:501;--w:19.1;color:#d8d8d8;font-size:8.5px;-webkit-text-stroke:0.05px currentColor;left:958.30px;top:501.75px;transform:scaleX(0.823919);">2_2綾</div>
<div class="t" style="--x:962;--y:513.3;--w:12.5;color:#d0d0d0;font-size:9px;-webkit-text-stroke:0;left:962.00px;top:511.80px;transform:scaleX(0.86175);">4x4</div>
<div class="t" style="--x:32.2;--y:581.5;--w:62.8;color:#444;font-size:8.2px;left:33.12px;top:581.90px;transform:scaleX(0.923818);">組織 dobby 56X24</div>
<div class="t" style="--x:101.7;--y:581.5;--w:41.3;color:#444;font-size:8.2px;left:102.63px;top:581.90px;transform:scaleX(0.930563);">経本数 56本</div>
<div class="t" style="--x:150;--y:581.5;--w:41;color:#444;font-size:8.2px;left:150.92px;top:581.90px;transform:scaleX(0.923803);">緯本数 24本</div>
<div class="t" style="--x:197.7;--y:581.5;--w:62.1;color:#444;font-size:8.2px;left:197.70px;top:581.90px;transform:scaleX(0.954959);">最小公倍数 56x24</div>
</div><!--/txt-->
<script>
(function(){var c=document.createElement('canvas').getContext('2d');
var els=document.querySelectorAll('.t');
for(var i=0;i<els.length;i++){var e=els[i];var cs=getComputedStyle(e);
var X=parseFloat(cs.getPropertyValue('--x')),Y=parseFloat(cs.getPropertyValue('--y')),W=parseFloat(cs.getPropertyValue('--w'));
if(isNaN(X))continue;
c.font=cs.fontWeight+' '+cs.fontSize+' '+cs.fontFamily;
var m=c.measureText(e.textContent);
var il=-m.actualBoundingBoxLeft, ir=m.actualBoundingBoxRight, asc=m.actualBoundingBoxAscent;
var fa=m.fontBoundingBoxAscent, fd=m.fontBoundingBoxDescent, fs=parseFloat(cs.fontSize);
var base=(fs-(fa+fd))/2+fa;
var s=(W>0&&ir>il)?W/(ir-il):1;
e.style.left=(X-il*s)+'px';e.style.top=(Y-(base-asc))+'px';
if(s!==1){e.style.transform='scaleX('+s+')';}
}})();
</script>
</body></html>
